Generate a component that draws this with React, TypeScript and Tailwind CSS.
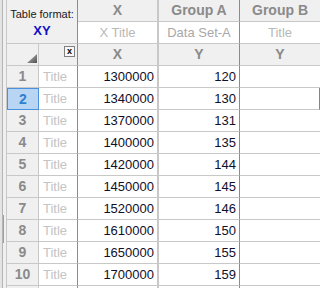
import React from 'react';

const rows: [number, string, string][] = [
  [1, '1300000', '120'],
  [2, '1340000', '130'],
  [3, '1370000', '131'],
  [4, '1400000', '135'],
  [5, '1420000', '144'],
  [6, '1450000', '145'],
  [7, '1520000', '146'],
  [8, '1610000', '150'],
  [9, '1650000', '155'],
  [10, '1700000', '159'],
  [11, '', ''],
];

const light = 'border-[#c8c8c8]';

export default function App() {
  return (
    <div className="flex h-[288px] w-[320px] overflow-hidden bg-white font-['Liberation_Sans',Arial,sans-serif]">
      {/* gutter */}
      <div className="flex w-[7px] shrink-0 flex-col bg-[#f0f0f0]">
        <div className="flex h-full">
          <div className="w-[2px] bg-[#e4e4e4]" />
          <div className="w-px bg-[#b4b4b4]" />
          <div className="flex w-[3px] flex-col pt-[215px]">
            <div className="h-[28px] w-px bg-[#a0a0a0]" />
          </div>
          <div className="w-px bg-[#c8c8c8]" />
        </div>
      </div>

      <div className="grid shrink-0 grid-cols-[32px_39px_81px_81px_80px] auto-rows-[22px] content-start">
        {/* header rows 1 and 2 */}
        <div className={`col-span-2 row-span-2 flex flex-col items-center justify-center gap-[2px] border-b border-r bg-[#f0f0f0] pt-[2px] ${light} border-r-[#8c8c8c]`}>
          <div className="text-[11px] leading-[13px] text-[#202020]">Table format:</div>
          <div className="text-[13px] font-bold leading-[15px] text-[#1010c8]">XY</div>
        </div>
        <div className={`flex items-center justify-center border-b border-r-2 bg-[#f0f0f0] ${light} text-[14px] font-bold text-[#8a8a8a]`}>X</div>
        <div className={`flex items-center justify-center border-b border-r bg-[#f0f0f0] ${light} border-r-[#8c8c8c] text-[14px] font-bold text-[#8a8a8a]`}>Group A</div>
        <div className={`flex items-center justify-center border-b bg-[#f0f0f0] ${light} text-[14px] font-bold text-[#8a8a8a]`}>Group B</div>

        <div className={`flex items-center justify-center border-b border-r-2 bg-white ${light} text-[13px] text-[#b8b8b8]`}>X Title</div>
        <div className={`flex items-center justify-center border-b border-r bg-white ${light} border-r-[#8c8c8c] text-[13px] text-[#a8a8a8]`}>Data Set-A</div>
        <div className={`flex items-center justify-center border-b bg-white ${light} text-[13px] text-[#b8b8b8]`}>Title</div>

        {/* header row 3 */}
        <div className={`relative border-b border-r bg-[#f0f0f0] ${light}`}>
          <svg className="absolute bottom-[2px] right-[1px]" width="10" height="9" viewBox="0 0 10 9">
            <defs>
              <linearGradient id="tri" x1="0" y1="0" x2="1" y2="1">
                <stop offset="0" stopColor="#c0c0c0" />
                <stop offset="1" stopColor="#505050" />
              </linearGradient>
            </defs>
            <polygon points="10,0 10,9 0,9" fill="url(#tri)" />
          </svg>
        </div>
        <div className={`flex items-start justify-end border-b border-r bg-[#f0f0f0] pr-[2px] pt-[2px] ${light} border-r-[#8c8c8c]`}>
          <div className="flex h-[11px] w-[11px] items-center justify-center border border-[#808080] bg-[#f8f8f8] text-[9px] font-bold leading-none text-black">x</div>
        </div>
        <div className={`flex items-center justify-center border-b border-r-2 bg-[#f0f0f0] ${light} text-[14px] font-bold text-[#8a8a8a]`}>X</div>
        <div className={`flex items-center justify-center border-b border-r bg-[#f0f0f0] ${light} border-r-[#8c8c8c] text-[14px] font-bold text-[#8a8a8a]`}>Y</div>
        <div className={`flex items-center justify-center border-b bg-[#f0f0f0] ${light} text-[14px] font-bold text-[#8a8a8a]`}>Y</div>

        {/* data */}
        {rows.map(([n, x, y]) => {
          const sel = n === 2;
          const blank = n > 10;
          return (
            <React.Fragment key={n}>
              <div
                className={
                  sel
                    ? 'flex items-center justify-center border border-[#4a90e0] bg-[#b8d6f4] text-[14px] font-bold text-[#2f7fd0]'
                    : `flex items-center justify-center border-b border-r bg-[#f0f0f0] ${light} text-[14px] font-bold text-[#8a8a8a]`
                }
              >
                {blank ? '' : n}
              </div>
              <div className={`flex items-center border-b border-r bg-white pl-[4px] ${light} border-r-[#8c8c8c] text-[13px] text-[#c4c4c4]`}>{blank ? '' : 'Title'}</div>
              <div className={`flex items-center justify-end border-b border-r-2 bg-white pr-[3px] ${light} text-[13px] text-[#10102a]`}>{x}</div>
              <div className={`flex items-center justify-end border-b border-r bg-white pr-[3px] ${light} border-r-[#8c8c8c] text-[13px] text-[#10102a]`}>{y}</div>
              <div className={`border-b bg-white ${light} ${sel ? 'border-r border-r-[#4a90e0]' : ''}`} />
            </React.Fragment>
          );
        })}
      </div>
    </div>
  );
}
